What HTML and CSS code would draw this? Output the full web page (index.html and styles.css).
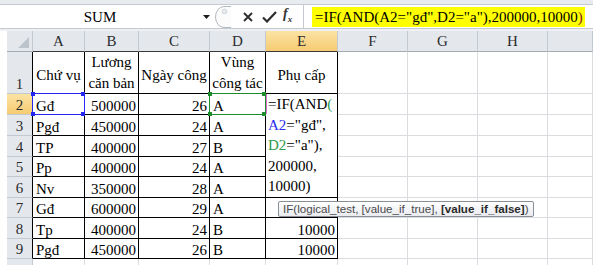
FILE: index.html
```html
<!DOCTYPE html>
<html lang="vi">
<head>
    <meta charset="UTF-8">
    <title>Phụ cấp - IF(AND)</title>
    <link rel="stylesheet" href="styles.css">
</head>
<body>
    <div class="topband"></div>
    <div class="fbar">
        <div class="namebox">SUM</div>
        <span class="drop"><svg width="7" height="4" viewBox="0 0 7 4"><path d="M0 0H7L3.5 4Z" fill="#1c1c1c"/></svg></span>
        <span class="split"><svg width="18" height="24" viewBox="0 0 18 24"><path d="M18 1.5H11A8.5 10.5 0 0 0 11 22.5H18" fill="#fbfbfc" stroke="#b3b9c1"/><circle cx="11.5" cy="6.5" r="2.5" fill="#e4e7eb" stroke="#cfd3d8" stroke-width="0.8"/></svg></span>
        <span class="btn x"><svg width="10" height="10" viewBox="0 0 10 10"><path d="M1 1L9 9M9 1L1 9" stroke="#2e2e2e" stroke-width="1.9"/></svg></span>
        <span class="btn ok"><svg width="15" height="12" viewBox="0 0 15 12"><path d="M1 6.5L5 10.5L14 1" fill="none" stroke="#2e2e2e" stroke-width="2.2"/></svg></span>
        <span class="fx"><i>f</i><sub>x</sub></span>
        <div class="input"><span class="hl">=IF(AND(A2="gđ",D2="a"),200000,10000<span class="rp">)</span></span></div>
    </div>
    <div class="gap"></div>

    <div class="sheet">
        <!-- column headers -->
        <div class="hd corner"></div>
        <div class="hd t">A</div>
        <div class="hd t">B</div>
        <div class="hd t">C</div>
        <div class="hd t">D</div>
        <div class="hd t on">E</div>
        <div class="hd">F</div>
        <div class="hd">G</div>
        <div class="hd">H</div>
        <div class="hd"></div>

        <!-- row 1 -->
        <div class="rh">1</div>
        <div class="d ctr lo">Chứ vụ</div>
        <div class="d ctr">Lương<br>căn bản</div>
        <div class="d ctr lo">Ngày công</div>
        <div class="d ctr">Vùng<br>công tác</div>
        <div class="d ctr lo">Phụ cấp</div>
        <div class="c"></div><div class="c"></div><div class="c"></div><div class="c"></div>

        <!-- row 2 -->
        <div class="rh on">2</div>
        <div class="d ref blue">Gđ</div>
        <div class="d num">500000</div>
        <div class="d num">26</div>
        <div class="d ref green">A</div>
        <div class="d edit">
            <div>=IF(AND<span class="g">(</span></div>
            <div><span class="b">A2</span>="gđ",</div>
            <div><span class="g">D2</span>="a"),</div>
            <div>200000,</div>
            <div>10000)</div>
        </div>
        <div class="c"></div><div class="c"></div><div class="c"></div><div class="c"></div>

        <!-- row 3 -->
        <div class="rh">3</div>
        <div class="d">Pgđ</div>
        <div class="d num">450000</div>
        <div class="d num">24</div>
        <div class="d">A</div>
        <div class="c"></div><div class="c"></div><div class="c"></div><div class="c"></div>

        <!-- row 4 -->
        <div class="rh">4</div>
        <div class="d">TP</div>
        <div class="d num">400000</div>
        <div class="d num">27</div>
        <div class="d">B</div>
        <div class="c"></div><div class="c"></div><div class="c"></div><div class="c"></div>

        <!-- row 5 -->
        <div class="rh">5</div>
        <div class="d">Pp</div>
        <div class="d num">400000</div>
        <div class="d num">24</div>
        <div class="d">A</div>
        <div class="c"></div><div class="c"></div><div class="c"></div><div class="c"></div>

        <!-- row 6 -->
        <div class="rh">6</div>
        <div class="d">Nv</div>
        <div class="d num">350000</div>
        <div class="d num">28</div>
        <div class="d">A</div>
        <div class="c"></div><div class="c"></div><div class="c"></div><div class="c"></div>

        <!-- row 7 -->
        <div class="rh">7</div>
        <div class="d">Gđ</div>
        <div class="d num">600000</div>
        <div class="d num">29</div>
        <div class="d">A</div>
        <div class="d tipcell">
            <div class="tip">IF(logical_test, [value_if_true], <b>[value_if_false]</b>)</div>
        </div>
        <div class="c"></div><div class="c"></div><div class="c"></div><div class="c"></div>

        <!-- row 8 -->
        <div class="rh">8</div>
        <div class="d">Tp</div>
        <div class="d num">400000</div>
        <div class="d num">24</div>
        <div class="d">B</div>
        <div class="d num">10000</div>
        <div class="c"></div><div class="c"></div><div class="c"></div><div class="c"></div>

        <!-- row 9 -->
        <div class="rh">9</div>
        <div class="d">Pgđ</div>
        <div class="d num">450000</div>
        <div class="d num">26</div>
        <div class="d">B</div>
        <div class="d num">10000</div>
        <div class="c"></div><div class="c"></div><div class="c"></div><div class="c"></div>

        <!-- row 10, cut by the window -->
        <div class="rh last"></div>
        <div class="c"></div><div class="c"></div><div class="c"></div><div class="c"></div><div class="c"></div>
        <div class="c"></div><div class="c"></div><div class="c"></div><div class="c"></div>
    </div>
</body>
</html>
```

FILE: styles.css
```css
* {
    margin: 0;
    padding: 0;
    box-sizing: border-box;
}
body {
    width: 593px;
    height: 265px;
    overflow: hidden;
    background: #fff;
    color: #000;
    font-family: "Liberation Serif", "Times New Roman", serif;
    font-size: 15px;
}

/* formula bar */
.topband {
    height: 5px;
    background: #e8ebef;
    border-bottom: 1px solid #c5cad1;
}
.fbar {
    display: flex;
    align-items: center;
    height: 24px;
    border-bottom: 1px solid #c5cad1;
}
.namebox {
    width: 200px;
    text-align: center;
    line-height: 22px;
}
.drop {
    display: flex;
    justify-content: center;
    width: 12px;
    padding-top: 1px;
}
.split {
    display: flex;
    width: 19px;
    margin-left: 1px;
}
.btn {
    display: flex;
    justify-content: center;
}
.btn.x {
    width: 14px;
    margin-left: 9px;
}
.btn.ok {
    width: 17px;
    margin-left: 6px;
}
.fx {
    width: 16px;
    margin-left: 5px;
    font-weight: bold;
    font-size: 14px;
    color: #333;
    line-height: 14px;
}
.fx sub {
    font-size: 9px;
    font-style: italic;
}
.input {
    flex: 1;
    height: 100%;
    display: flex;
    align-items: center;
    margin-left: 4px;
    padding-left: 8px;
    border-left: 1px solid #c5cad1;
}
.hl {
    background: #ffff00;
    padding: 1px 2px 1px 3px;
    line-height: 18px;
    white-space: nowrap;
}
.rp {
    color: #8b1c1c;
}
.gap {
    height: 2px;
    background: #eef0f3;
}

/* sheet grid */
.sheet {
    display: grid;
    margin-left: 7px;
    grid-template-columns: 26px 52px 54px 71px 56px 72px 70px 70px 70px 45px;
    grid-template-rows: 21px 42px 21px 21px 21px 20px 21px 20px 21px 20px 21px;
}
.hd {
    display: flex;
    justify-content: center;
    align-items: center;
    background: #e4e8ed;
    color: #2c2c2c;
    border-right: 1px solid #c3c9d1;
    border-bottom: 1px solid #a3abb5;
    padding-top: 1px;
}
.hd.t {
    border-bottom-color: #3a3a3a;
}
.hd.on {
    background: linear-gradient(#fbe3a4, #f6cb72);
    border-bottom-color: #3a3a3a;
}
.corner {
    position: relative;
}
.corner::after {
    content: "";
    position: absolute;
    right: 3px;
    bottom: 3px;
    border-left: 11px solid transparent;
    border-bottom: 11px solid #bcc3cb;
}
.rh {
    display: flex;
    justify-content: center;
    align-items: flex-end;
    line-height: 15px;
    padding-bottom: 1px;
    background: #e4e8ed;
    color: #2c2c2c;
    border-right: 1px solid #000;
    border-bottom: 1px solid #c3c9d1;
}
.rh.on {
    background: linear-gradient(#fbe3a4, #f6cb72);
}
.rh.last {
    border-right-color: #c3c9d1;
}
.c {
    border-right: 1px solid #dadcdf;
    border-bottom: 1px solid #dadcdf;
}
.d {
    position: relative;
    display: flex;
    align-items: flex-end;
    padding: 0 2px 0 3px;
    line-height: 15px;
    white-space: nowrap;
    border-right: 1px solid #000;
    border-bottom: 1px solid #000;
}
.d.num {
    justify-content: flex-end;
}
.d.ctr {
    align-items: center;
    justify-content: center;
    text-align: center;
    line-height: 20.5px;
    padding: 0;
}
.d.ctr.lo {
    padding-top: 6px;
}

/* range reference boxes */
.ref {
    z-index: 2;
}
.ref::before {
    content: "";
    position: absolute;
    left: -1px;
    top: -1px;
    right: -1px;
    bottom: -1px;
    border: 1px solid var(--rc);
}
.ref::after {
    content: "";
    position: absolute;
    left: -2px;
    top: -2px;
    width: 4px;
    height: 4px;
    background: var(--rc);
}
.ref.blue {
    --rc: #2626f2;
}
.ref.blue::after {
    box-shadow: 50px 0 0 #2626f2, 0 20px 0 #2626f2, 50px 20px 0 #2626f2;
}
.ref.green {
    --rc: #1d8c2c;
}
.ref.green::after {
    box-shadow: 54px 0 0 #1d8c2c, 0 20px 0 #1d8c2c, 54px 20px 0 #1d8c2c;
}

/* cell in edit mode */
.edit {
    grid-row: span 5;
    display: block;
    background: #fff;
    padding: 0 0 0 2px;
    line-height: 20.6px;
}
.edit::before {
    content: "";
    position: absolute;
    left: 0;
    top: 0;
    width: 1px;
    height: 20px;
    background: #e36ad4;
}
.edit .g {
    color: #2f9a4a;
}
.edit .b {
    color: #2b2bf0;
}

/* function tooltip */
.tip {
    position: absolute;
    left: 12px;
    top: 3px;
    z-index: 5;
    height: 16px;
    padding: 0 4px;
    border: 1px solid #8a8f96;
    border-radius: 2px;
    background: linear-gradient(#ffffff, #e9ebf0);
    color: #4a4a4a;
    font-family: "Liberation Sans", Arial, sans-serif;
    font-size: 11.6px;
    line-height: 14px;
    white-space: nowrap;
}
.tip b {
    color: #2a2a2a;
}
```
